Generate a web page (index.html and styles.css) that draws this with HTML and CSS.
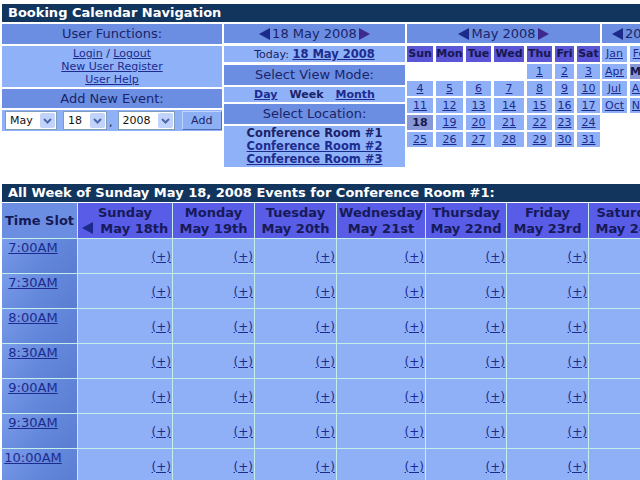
FILE: index.html
```html
<!DOCTYPE html>
<html>
<head>
<meta charset="utf-8">
<title>Booking Calendar</title>
<link rel="stylesheet" href="styles.css">
</head>
<body>
<div class="page">
  <div class="bar">Booking Calendar Navigation</div>
  <div class="nav">
    <div class="col left">
      <div class="hdr h20">User Functions:</div>
      <div class="box links">
        <a href="#">Login</a> / <a href="#">Logout</a><br>
        <a href="#">New User Register</a><br>
        <a href="#">User Help</a>
      </div>
      <div class="hdr h19 mt2">Add New Event:</div>
      <div class="form">
        <span class="sel w-may"><select class="sel-input"><option>May</option></select><span class="sel-btn"><svg width="9" height="6" viewBox="0 0 9 6"><polyline points="1,1 4.5,4.5 8,1" fill="none" stroke="#4d68a6" stroke-width="2"/></svg></span></span>
        <span class="sel w-day"><select class="sel-input"><option>18</option></select><span class="sel-btn"><svg width="9" height="6" viewBox="0 0 9 6"><polyline points="1,1 4.5,4.5 8,1" fill="none" stroke="#4d68a6" stroke-width="2"/></svg></span></span>
        <span class="comma">,</span>
        <span class="sel w-year"><select class="sel-input"><option>2008</option></select><span class="sel-btn"><svg width="9" height="6" viewBox="0 0 9 6"><polyline points="1,1 4.5,4.5 8,1" fill="none" stroke="#4d68a6" stroke-width="2"/></svg></span></span>
        <button class="add-btn">Add</button>
      </div>
    </div>

    <div class="col mid">
      <div class="hdr h19 arrows">
        <svg class="arr" width="11" height="12" viewBox="0 0 11 12"><polygon points="11,0 0,6 11,12" fill="#1c2a8c"/></svg>
        <span>18 May 2008</span>
        <svg class="arr" width="11" height="12" viewBox="0 0 11 12"><polygon points="0,0 11,6 0,12" fill="#3d2a8a"/></svg>
      </div>
      <div class="box today">Today: <a href="#" class="b">18 May 2008</a></div>
      <div class="hdr h20 mt3">Select View Mode:</div>
      <div class="box modes"><a href="#">Day</a><span>Week</span><a href="#">Month</a></div>
      <div class="hdr h20 mt2">Select Location:</div>
      <div class="box rooms">
        <span>Conference Room #1</span><br>
        <a href="#">Conference Room #2</a><br>
        <a href="#">Conference Room #3</a>
      </div>
    </div>

    <div class="col cal">
      <div class="hdr h19 arrows">
        <svg class="arr" width="11" height="12" viewBox="0 0 11 12"><polygon points="11,0 0,6 11,12" fill="#1c2a8c"/></svg>
        <span>May 2008</span>
        <svg class="arr" width="11" height="12" viewBox="0 0 11 12"><polygon points="0,0 11,6 0,12" fill="#3d2a8a"/></svg>
      </div>
      <div class="cal-grid">
        <div class="dn">Sun</div><div class="dn">Mon</div><div class="dn">Tue</div><div class="dn">Wed</div><div class="dn">Thu</div><div class="dn">Fri</div><div class="dn">Sat</div>
        <div></div><div></div><div></div><div></div><div class="d"><a href="#">1</a></div><div class="d"><a href="#">2</a></div><div class="d"><a href="#">3</a></div>
        <div class="d"><a href="#">4</a></div><div class="d"><a href="#">5</a></div><div class="d"><a href="#">6</a></div><div class="d"><a href="#">7</a></div><div class="d"><a href="#">8</a></div><div class="d"><a href="#">9</a></div><div class="d"><a href="#">10</a></div>
        <div class="d"><a href="#">11</a></div><div class="d"><a href="#">12</a></div><div class="d"><a href="#">13</a></div><div class="d"><a href="#">14</a></div><div class="d"><a href="#">15</a></div><div class="d"><a href="#">16</a></div><div class="d"><a href="#">17</a></div>
        <div class="d cur">18</div><div class="d"><a href="#">19</a></div><div class="d"><a href="#">20</a></div><div class="d"><a href="#">21</a></div><div class="d"><a href="#">22</a></div><div class="d"><a href="#">23</a></div><div class="d"><a href="#">24</a></div>
        <div class="d"><a href="#">25</a></div><div class="d"><a href="#">26</a></div><div class="d"><a href="#">27</a></div><div class="d"><a href="#">28</a></div><div class="d"><a href="#">29</a></div><div class="d"><a href="#">30</a></div><div class="d"><a href="#">31</a></div>
      </div>
    </div>

    <div class="col year">
      <div class="hdr h19 arrows year-hdr">
        <svg class="arr" width="11" height="12" viewBox="0 0 11 12"><polygon points="11,0 0,6 11,12" fill="#1c2a8c"/></svg>
        <span>2008</span>
        <svg class="arr" width="11" height="12" viewBox="0 0 11 12"><polygon points="0,0 11,6 0,12" fill="#3d2a8a"/></svg>
      </div>
      <div class="year-grid">
        <div class="m"><a href="#">Jan</a></div><div class="m"><a href="#">Feb</a></div><div class="m"><a href="#">Mar</a></div>
        <div class="m"><a href="#">Apr</a></div><div class="m cur">May</div><div class="m"><a href="#">Jun</a></div>
        <div class="m"><a href="#">Jul</a></div><div class="m"><a href="#">Aug</a></div><div class="m"><a href="#">Sep</a></div>
        <div class="m"><a href="#">Oct</a></div><div class="m"><a href="#">Nov</a></div><div class="m"><a href="#">Dec</a></div>
      </div>
    </div>
  </div>

  <div class="bar wk-bar">All Week of Sunday May 18, 2008 Events for Conference Room #1:</div>
  <div class="wk-grid">
    <div class="th th-time">Time Slot</div>
    <div class="th">Sunday<br><svg class="arr-s" width="11" height="12" viewBox="0 0 11 12"><polygon points="11,0 0,6 11,12" fill="#1c2a8c"/></svg> May 18th</div>
    <div class="th">Monday<br>May 19th</div>
    <div class="th">Tuesday<br>May 20th</div>
    <div class="th">Wednesday<br>May 21st</div>
    <div class="th">Thursday<br>May 22nd</div>
    <div class="th">Friday<br>May 23rd</div>
    <div class="th">Saturday<br>May 24th</div>

    <div class="tc"><a href="#">7:00AM</a></div>
    <div class="cell"><a href="#">(+)</a></div><div class="cell"><a href="#">(+)</a></div><div class="cell"><a href="#">(+)</a></div><div class="cell"><a href="#">(+)</a></div><div class="cell"><a href="#">(+)</a></div><div class="cell"><a href="#">(+)</a></div><div class="cell"><a href="#">(+)</a></div>

    <div class="tc"><a href="#">7:30AM</a></div>
    <div class="cell"><a href="#">(+)</a></div><div class="cell"><a href="#">(+)</a></div><div class="cell"><a href="#">(+)</a></div><div class="cell"><a href="#">(+)</a></div><div class="cell"><a href="#">(+)</a></div><div class="cell"><a href="#">(+)</a></div><div class="cell"><a href="#">(+)</a></div>

    <div class="tc"><a href="#">8:00AM</a></div>
    <div class="cell"><a href="#">(+)</a></div><div class="cell"><a href="#">(+)</a></div><div class="cell"><a href="#">(+)</a></div><div class="cell"><a href="#">(+)</a></div><div class="cell"><a href="#">(+)</a></div><div class="cell"><a href="#">(+)</a></div><div class="cell"><a href="#">(+)</a></div>

    <div class="tc"><a href="#">8:30AM</a></div>
    <div class="cell"><a href="#">(+)</a></div><div class="cell"><a href="#">(+)</a></div><div class="cell"><a href="#">(+)</a></div><div class="cell"><a href="#">(+)</a></div><div class="cell"><a href="#">(+)</a></div><div class="cell"><a href="#">(+)</a></div><div class="cell"><a href="#">(+)</a></div>

    <div class="tc"><a href="#">9:00AM</a></div>
    <div class="cell"><a href="#">(+)</a></div><div class="cell"><a href="#">(+)</a></div><div class="cell"><a href="#">(+)</a></div><div class="cell"><a href="#">(+)</a></div><div class="cell"><a href="#">(+)</a></div><div class="cell"><a href="#">(+)</a></div><div class="cell"><a href="#">(+)</a></div>

    <div class="tc"><a href="#">9:30AM</a></div>
    <div class="cell"><a href="#">(+)</a></div><div class="cell"><a href="#">(+)</a></div><div class="cell"><a href="#">(+)</a></div><div class="cell"><a href="#">(+)</a></div><div class="cell"><a href="#">(+)</a></div><div class="cell"><a href="#">(+)</a></div><div class="cell"><a href="#">(+)</a></div>

    <div class="tc"><a href="#">10:00AM</a></div>
    <div class="cell"><a href="#">(+)</a></div><div class="cell"><a href="#">(+)</a></div><div class="cell"><a href="#">(+)</a></div><div class="cell"><a href="#">(+)</a></div><div class="cell"><a href="#">(+)</a></div><div class="cell"><a href="#">(+)</a></div><div class="cell"><a href="#">(+)</a></div>
  </div>
</div>
</body>
</html>
```
FILE: styles.css
```css
html, body {
  margin: 0;
  padding: 0;
  overflow: hidden;
  background: #ffffff;
}
body {
  width: 640px;
  height: 480px;
  font-family: "DejaVu Sans", Verdana, sans-serif;
  color: #1b2266;
}
a {
  color: #1d2b8e;
  text-decoration: underline;
}
.page {
  width: 638px;
  padding: 4px 0 0 2px;
}
.bar {
  height: 18px;
  line-height: 18px;
  background: #12355e;
  color: #ffffff;
  font-weight: bold;
  font-size: 13px;
  padding-left: 6px;
  white-space: nowrap;
  overflow: hidden;
}
.nav {
  display: flex;
  align-items: flex-start;
  gap: 2px;
  margin-top: 2px;
}
.col {
  flex-shrink: 0;
  display: flex;
  flex-direction: column;
}
.left { width: 220px; }
.mid { width: 181px; }
.cal { width: 193px; }
.year { width: 84px; }

.hdr {
  background: #6b8ee2;
  text-align: center;
  font-size: 13px;
  color: #1b2468;
  white-space: nowrap;
}
.h20 { height: 20px; line-height: 20px; }
.h19 { height: 19px; line-height: 19px; }
.mt2 { margin-top: 2px; }
.mt3 { margin-top: 3px; }
.box {
  background: #8fb1f7;
  text-align: center;
  font-size: 11px;
  white-space: nowrap;
}
.links {
  margin-top: 2px;
  height: 41px;
  box-sizing: border-box;
  padding-top: 1px;
  line-height: 13px;
}
.form {
  margin-top: 2px;
  height: 21px;
  background: #8fb1f7;
  display: flex;
  align-items: center;
  padding-left: 3px;
}
.sel {
  display: inline-flex;
  align-items: center;
  height: 19px;
  box-sizing: border-box;
  border: 1px solid #7f9db9;
  background: #ffffff;
}
.sel-input {
  appearance: none;
  -webkit-appearance: none;
  border: 0;
  background: transparent;
  font-family: "DejaVu Sans", Verdana, sans-serif;
  font-size: 11px;
  color: #111111;
  height: 17px;
  padding: 0 0 0 4px;
  margin: 0;
  outline: none;
}
.sel-btn {
  width: 15px;
  height: 15px;
  margin: 0 1px;
  background: #c1d3fb;
  border-radius: 2px;
  display: flex;
  align-items: center;
  justify-content: center;
}
.w-may .sel-input { width: 33px; }
.w-day { margin-left: 6px; }
.w-day .sel-input { width: 25px; }
.w-year .sel-input { width: 38px; }
.comma {
  font-size: 11px;
  color: #111111;
  margin: 4px 5px 0 2px;
}
.add-btn {
  margin-left: 7px;
  width: 42px;
  height: 19px;
  padding: 0;
  box-sizing: border-box;
  background: #8daff3;
  border: 1px solid;
  border-color: #c0d4fb #4f6fb8 #4f6fb8 #c0d4fb;
  font-family: "DejaVu Sans", Verdana, sans-serif;
  font-size: 11px;
  color: #1b2468;
}

.arrows {
  display: flex;
  align-items: center;
  justify-content: center;
  gap: 2px;
}
.year-hdr {
  justify-content: flex-start;
  padding-left: 10px;
}
.arr { display: block; flex-shrink: 0; }
.today {
  margin-top: 3px;
  height: 16px;
  line-height: 16px;
}
.b { font-weight: bold; font-size: 11.5px; }
.modes {
  margin-top: 2px;
  height: 15px;
  line-height: 15px;
  font-weight: bold;
  display: flex;
  justify-content: center;
  gap: 12px;
}
.rooms {
  margin-top: 2px;
  height: 41px;
  box-sizing: border-box;
  padding-top: 1px;
  line-height: 13px;
  font-weight: bold;
  font-size: 11.5px;
}

.cal-grid {
  margin-top: 3px;
  display: grid;
  grid-template-columns: 26px 27px 25px 30px 25px 19px 23px;
  grid-template-rows: 16px repeat(5, 15px);
  column-gap: 3px;
  row-gap: 2px;
  font-size: 11px;
  text-align: center;
}
.dn {
  background: #5a56d6;
  font-weight: bold;
  line-height: 16px;
  color: #17184f;
}
.d {
  background: #8fb0f6;
  line-height: 15px;
}
.d.cur {
  background: #8898d6;
  font-weight: bold;
  color: #17184f;
}
.year-grid {
  margin-top: 3px;
  display: grid;
  grid-template-columns: 25px 25px 25px;
  grid-template-rows: 16px 15px 15px 15px;
  column-gap: 3px;
  row-gap: 2px;
  font-size: 11px;
  text-align: center;
}
.m {
  background: #8fb0f6;
  line-height: 16px;
}
.m.cur {
  background: #8898d6;
  font-weight: bold;
  color: #17184f;
}

.wk-bar {
  margin-top: 17px;
}
.wk-grid {
  margin-top: 1px;
  display: grid;
  grid-template-columns: 75px 94px 81px 81px 88px 80px 81px 81px;
  grid-template-rows: 35px;
  grid-auto-rows: 34px;
  gap: 1px;
  background: #c6eee8;
  width: max-content;
}
.th {
  background: #585ce6;
  color: #161a58;
  font-weight: bold;
  font-size: 13px;
  line-height: 16px;
  padding-top: 2px;
  text-align: center;
  white-space: nowrap;
  overflow: hidden;
}
.th-time {
  background: #6b8ee2;
  padding-top: 0;
  display: flex;
  align-items: center;
  justify-content: center;
}
.arr-s {
  display: inline-block;
  vertical-align: -1px;
  margin-right: 3px;
}
.tc {
  background: linear-gradient(135deg, #7a9cec 0%, #6387da 55%, #5a7dd2 100%);
  font-size: 13px;
  line-height: 15px;
  padding: 1px 13px 0 0;
  text-align: center;
}
.cell {
  background: #8fb0f7;
  font-size: 12px;
  display: flex;
  align-items: center;
  justify-content: flex-end;
  padding: 2px 1px 0 0;
}
```
